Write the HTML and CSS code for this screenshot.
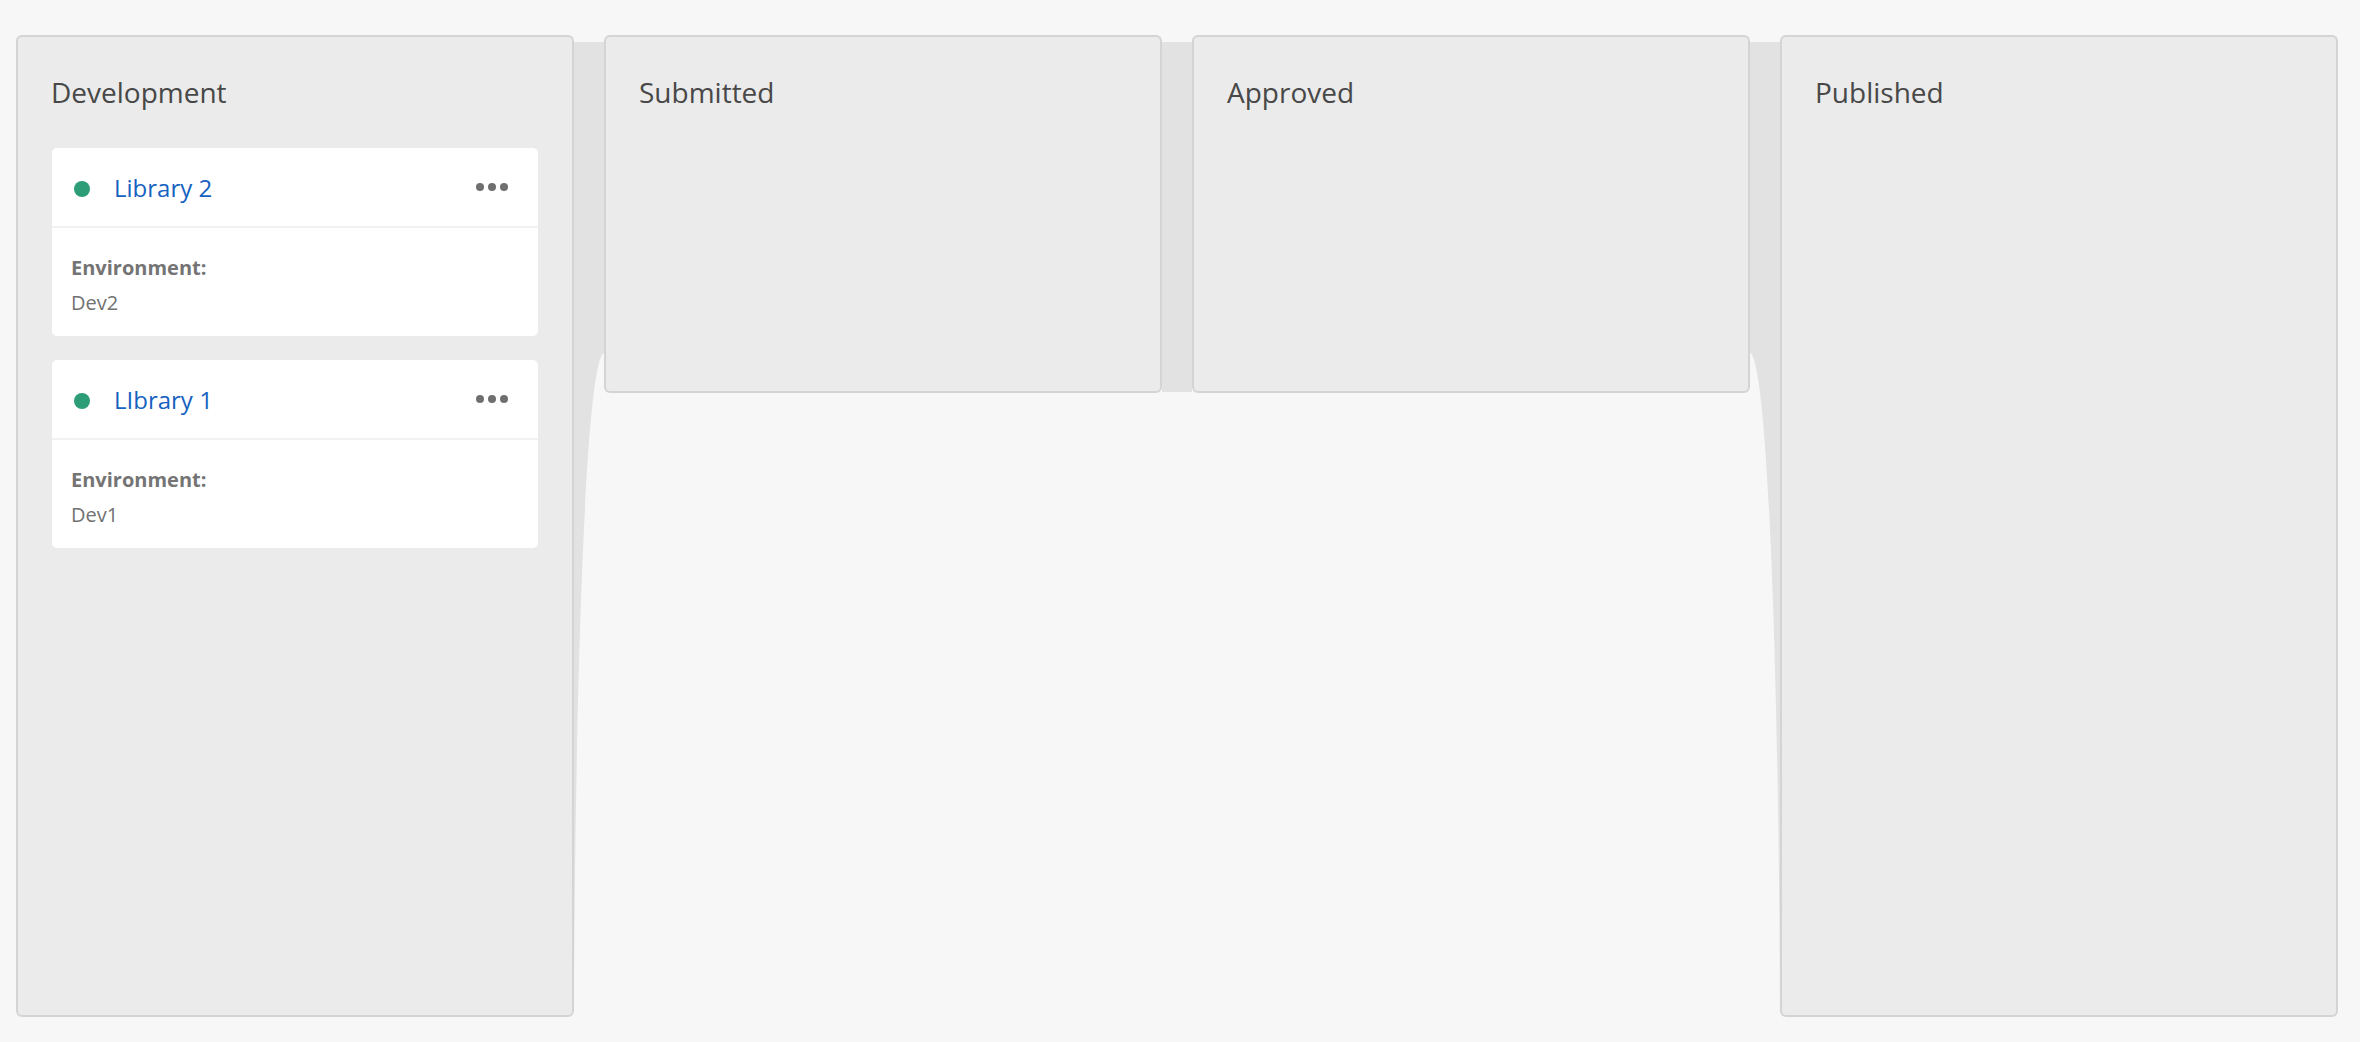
FILE: index.html
```html
<!DOCTYPE html>
<html lang="en">
<head>
<meta charset="utf-8">
<title>Library workflow</title>
<link rel="stylesheet" href="styles.css">
</head>
<body>
<main class="board">
  <section class="col col-tall">
    <h2 class="col-title">Development</h2>
    <article class="card">
      <div class="card-head">
        <span class="dot"></span>
        <span class="card-title">Library 2</span>
        <span class="more"><i></i><i></i><i></i></span>
      </div>
      <div class="card-body">
        <div class="label">Environment:</div>
        <div class="value">Dev2</div>
      </div>
    </article>
    <article class="card">
      <div class="card-head">
        <span class="dot"></span>
        <span class="card-title">LIbrary 1</span>
        <span class="more"><i></i><i></i><i></i></span>
      </div>
      <div class="card-body">
        <div class="label">Environment:</div>
        <div class="value">Dev1</div>
      </div>
    </article>
  </section>

  <svg class="link link-curve" width="30" height="975" viewBox="0 0 30 975" aria-hidden="true">
    <path d="M0 0 H30 V311 C11 318 1 658 0 975 Z" fill="#e2e2e2"/>
  </svg>

  <section class="col col-short">
    <h2 class="col-title">Submitted</h2>
  </section>

  <div class="link link-mid" aria-hidden="true"></div>

  <section class="col col-short">
    <h2 class="col-title">Approved</h2>
  </section>

  <svg class="link link-curve" width="30" height="975" viewBox="0 0 30 975" aria-hidden="true">
    <path d="M0 0 H30 V975 C29 658 19 318 0 311 Z" fill="#e2e2e2"/>
  </svg>

  <section class="col col-tall">
    <h2 class="col-title">Published</h2>
  </section>
</main>
</body>
</html>
```

FILE: styles.css
```css
* {
  box-sizing: border-box;
}

html,
body {
  margin: 0;
  padding: 0;
  background: #f7f7f7;
  font-family: "Open Sans", "Liberation Sans", Arial, sans-serif;
}

.board {
  display: flex;
  align-items: flex-start;
  padding: 35px 0 0 16px;
  height: 1042px;
}

.col {
  flex: 0 0 558px;
  width: 558px;
  background: #ebebeb;
  border: 2px solid #d4d4d4;
  border-radius: 6px;
  padding: 36px 34px 0 34px;
}

.col-tall {
  height: 982px;
}

.col-short {
  height: 358px;
}

.col-title {
  margin: 0 0 37px -1px;
  font-size: 28px;
  line-height: 38px;
  font-weight: 400;
  color: #484848;
}

.link {
  flex: 0 0 30px;
  width: 30px;
  margin-top: 7px;
  display: block;
}

.link-mid {
  height: 350px;
  background: #e2e2e2;
}

.card {
  background: #ffffff;
  border-radius: 5px;
  margin-bottom: 24px;
}

.card-head {
  display: flex;
  align-items: center;
  height: 80px;
  padding: 0 30px 0 22px;
  border-bottom: 2px solid #f1f1f1;
}

.dot {
  flex: 0 0 16px;
  width: 16px;
  height: 16px;
  border-radius: 50%;
  background: #2d9d78;
  margin: 4px 24px 0 0;
}

.card-title {
  flex: 1;
  font-size: 24px;
  line-height: 33px;
  color: #1662c0;
}

.more {
  display: flex;
  gap: 4px;
}

.more i {
  display: block;
  width: 8px;
  height: 8px;
  border-radius: 50%;
  background: #6f6f6f;
}

.card-body {
  padding: 22px 19px 16px;
}

.label {
  font-size: 20px;
  line-height: 35px;
  font-weight: 700;
  color: #747474;
}

.value {
  font-size: 20px;
  line-height: 35px;
  color: #717171;
}
```
